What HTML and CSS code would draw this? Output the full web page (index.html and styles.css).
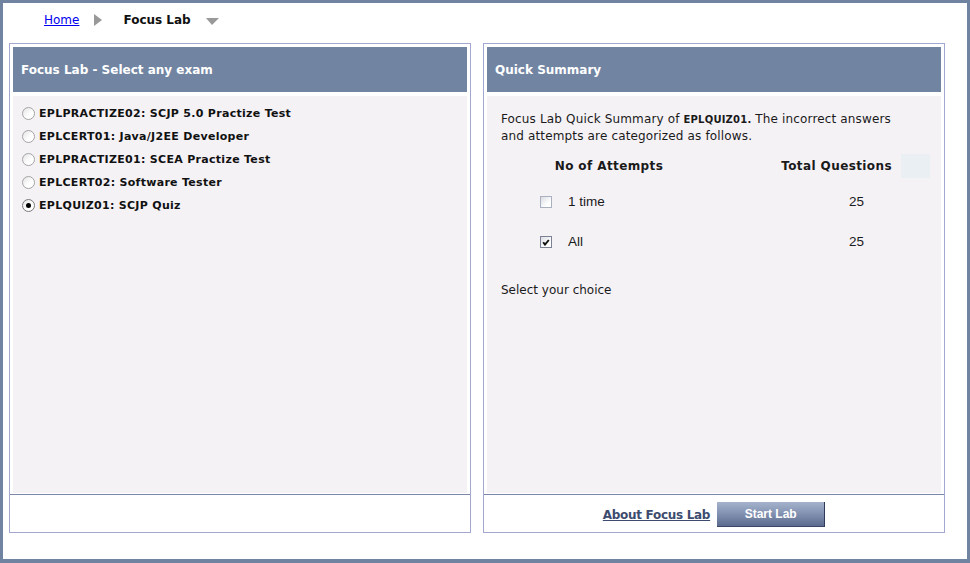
FILE: index.html
```html
<!DOCTYPE html>
<html lang="en">
<head>
  <meta charset="UTF-8" />
  <title>Focus Lab</title>
  <link rel="stylesheet" href="styles.css">
</head>
<body>
  <div class="frame">
    <div class="crumbs">
      <a href="#">Home</a>
      <span class="arrow-right"></span>
      <b class="current">Focus Lab</b>
      <span class="arrow-down"></span>
    </div>

    <div class="panels">
      <div class="panel">
        <div class="panel-main">
          <div class="panel-head">Focus Lab - Select any exam</div>
          <div class="panel-body">
            <ul class="exams">
              <li><span class="radio"></span>EPLPRACTIZE02: SCJP 5.0 Practize Test</li>
              <li><span class="radio"></span>EPLCERT01: Java/J2EE Developer</li>
              <li><span class="radio"></span>EPLPRACTIZE01: SCEA Practize Test</li>
              <li><span class="radio"></span>EPLCERT02: Software Tester</li>
              <li><span class="radio checked"></span>EPLQUIZ01: SCJP Quiz</li>
            </ul>
          </div>
        </div>
        <div class="panel-foot"></div>
      </div>

      <div class="panel">
        <div class="panel-main">
          <div class="panel-head">Quick Summary</div>
          <div class="panel-body summary">
            <p class="intro">Focus Lab Quick Summary of <b class="code">EPLQUIZ01.</b> The incorrect answers<br>and attempts are categorized as follows.</p>
            <div class="sum-head">
              <span class="th-attempts">No of Attempts</span>
              <span class="th-total">Total Questions</span>
              <span class="th-pad"></span>
            </div>
            <div class="sum-row">
              <span class="box"></span>
              <span class="label">1 time</span>
              <span class="count">25</span>
            </div>
            <div class="sum-row">
              <span class="box checked"><svg width="8" height="8" viewBox="0 0 8 8"><path d="M1.2 4.2 L3 6.6 L6.8 2" fill="none" stroke="#111" stroke-width="1.9"/></svg></span>
              <span class="label">All</span>
              <span class="count">25</span>
            </div>
            <p class="choice">Select your choice</p>
          </div>
        </div>
        <div class="panel-foot actions">
          <a href="#" class="about">About Focus Lab</a>
          <button class="start">Start Lab</button>
        </div>
      </div>
    </div>
  </div>
</body>
</html>
```

FILE: styles.css
```css
body {
  margin: 0;
  background: #fff;
  font-family: "DejaVu Sans", Verdana, sans-serif;
  color: #111;
}
.frame {
  box-sizing: border-box;
  height: 563px;
  border-style: solid;
  border-color: #7084a2;
  border-width: 3px 3px 4px 3px;
}
.crumbs {
  box-sizing: border-box;
  height: 40px;
  padding: 9px 0 0 41px;
  display: flex;
  align-items: flex-start;
  font-size: 12px;
  line-height: 16px;
}
.crumbs a {
  color: #0000ee;
}
.arrow-right {
  width: 0;
  height: 0;
  margin: 2px 0 0 15px;
  border-left: 8px solid #999;
  border-top: 6px solid transparent;
  border-bottom: 6px solid transparent;
}
.current {
  margin-left: 21px;
}
.arrow-down {
  width: 0;
  height: 0;
  margin: 6px 0 0 15px;
  border-top: 7px solid #999;
  border-left: 6px solid transparent;
  border-right: 7px solid transparent;
}
.panels {
  display: flex;
  gap: 12px;
  padding-left: 6px;
}
.panel {
  box-sizing: border-box;
  width: 462px;
  height: 490px;
  border: 1px solid #a2a8cf;
  display: flex;
  flex-direction: column;
}
.panel-main {
  flex: 1;
  padding: 3px 3px 1px;
  display: flex;
  flex-direction: column;
  gap: 4px;
}
.panel-head {
  height: 45px;
  flex: none;
  background: #7185a3;
  color: #fff;
  font-weight: bold;
  font-size: 12px;
  display: flex;
  align-items: center;
  padding-left: 8px;
}
.panel-body {
  flex: 1;
  background: #f5f2f6;
}
.panel-foot {
  box-sizing: border-box;
  height: 38px;
  flex: none;
  border-top: 1px solid #7b87a8;
}
.exams {
  list-style: none;
  margin: 0;
  padding: 6px 0 0 9px;
}
.exams li {
  height: 23px;
  display: flex;
  align-items: center;
  font-size: 11px;
  font-weight: bold;
  letter-spacing: 0.3px;
  color: #111;
}
.radio {
  box-sizing: border-box;
  width: 13px;
  height: 13px;
  margin-right: 4px;
  border: 1px solid #a4a4a4;
  border-radius: 50%;
  background: linear-gradient(135deg, #e4e4e4, #fff 60%);
  position: relative;
}
.radio.checked {
  border-color: #7a7a7a;
}
.radio.checked::after {
  content: "";
  position: absolute;
  left: 3px;
  top: 3px;
  width: 5px;
  height: 5px;
  border-radius: 50%;
  background: #000;
}
.summary {
  padding: 15px 11px 0 14px;
  font-size: 12px;
  line-height: 16px;
  color: #1a1a1a;
}
.intro {
  margin: 0;
  letter-spacing: 0.15px;
}
.code {
  font-size: 10px;
  letter-spacing: 0.2px;
}
.sum-head {
  display: flex;
  align-items: center;
  margin-top: 10px;
  font-weight: bold;
  font-size: 12px;
  letter-spacing: 0.4px;
}
.th-attempts {
  width: 216px;
  text-align: center;
}
.th-total {
  flex: 1;
  text-align: right;
}
.th-pad {
  width: 29px;
  height: 24px;
  margin-left: 9px;
  background: #e9eff3;
}
.sum-row {
  display: flex;
  align-items: center;
  height: 40px;
  padding-left: 39px;
  font-family: "Liberation Sans", Arial, sans-serif;
  font-size: 13.5px;
}
.sum-head + .sum-row {
  margin-top: 4px;
}
.box {
  box-sizing: border-box;
  width: 12px;
  height: 12px;
  border: 1px solid #a9b0c0;
  background: linear-gradient(135deg, #dcdde2, #fff 70%);
  display: flex;
  align-items: center;
  justify-content: center;
}
.box.checked {
  border-color: #7c8296;
}
.label {
  width: 281px;
  margin-left: 16px;
}
.choice {
  margin: 20px 0 0;
}
.actions {
  display: flex;
  align-items: center;
  justify-content: center;
  gap: 7px;
  padding-top: 2px;
}
.about {
  color: #3d4b6e;
  font-weight: bold;
  font-size: 12px;
  letter-spacing: -0.3px;
}
.start {
  width: 108px;
  height: 25px;
  border: none;
  border-right: 1px solid #2e3b58;
  border-bottom: 1px solid #3a4766;
  background: linear-gradient(#a5b3cc, #8594b3 45%, #5b6b8e);
  color: #fff;
  font-family: "Liberation Sans", Arial, sans-serif;
  font-weight: bold;
  font-size: 12px;
  cursor: pointer;
}
```
